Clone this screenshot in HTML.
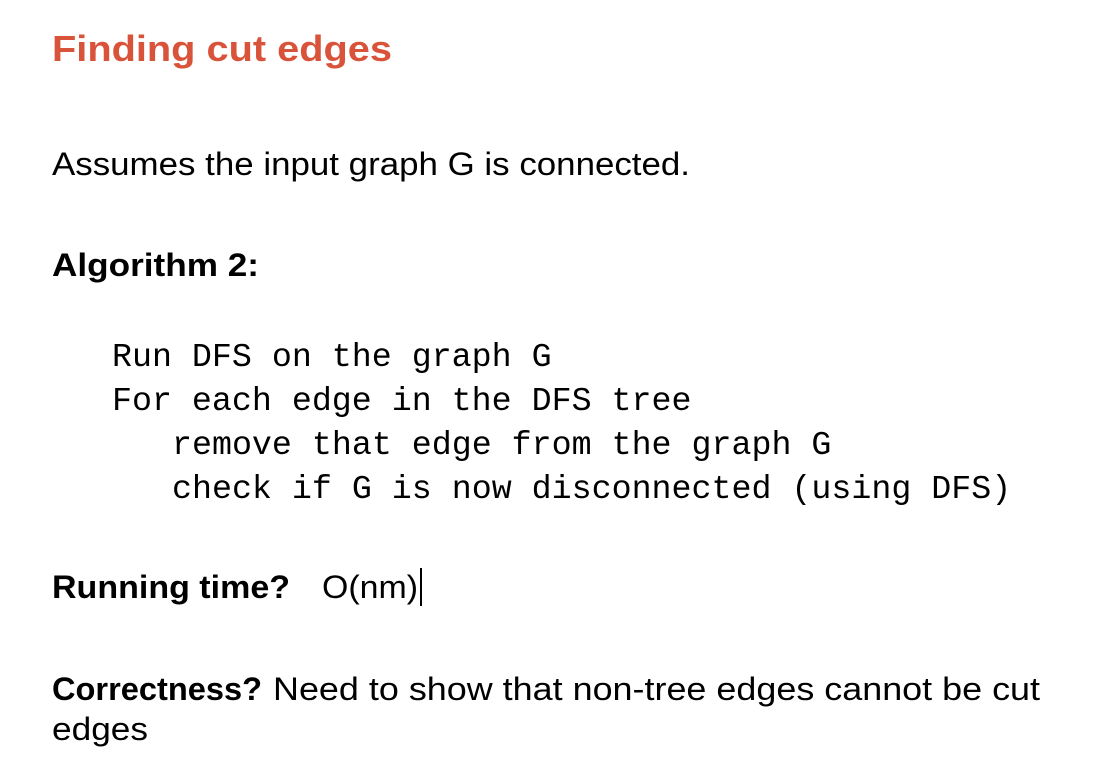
<!DOCTYPE html>
<html><head><style>html,body{margin:0;padding:0;background:#fff}svg{display:block}</style></head><body>
<svg width="1116" height="774" xmlns="http://www.w3.org/2000/svg">
<g font-family="Liberation Sans, sans-serif" fill="#000">
<text x="52" y="61" font-size="36" font-weight="bold" fill="#D9533A" textLength="340" lengthAdjust="spacingAndGlyphs">Finding cut edges</text>
<text x="52" y="175" font-size="32" textLength="638" lengthAdjust="spacingAndGlyphs">Assumes the input graph G is connected.</text>
<text x="52" y="276" font-size="32" font-weight="bold" textLength="207" lengthAdjust="spacingAndGlyphs">Algorithm 2:</text>
<text x="52" y="598" font-size="32" font-weight="bold" textLength="238" lengthAdjust="spacingAndGlyphs">Running time?</text>
<text x="322" y="598" font-size="32" textLength="96" lengthAdjust="spacingAndGlyphs">O(nm)</text>
<rect x="420" y="568" width="2" height="38" fill="#000"/>
<text x="52" y="700" font-size="32" font-weight="bold" textLength="210" lengthAdjust="spacingAndGlyphs">Correctness?</text>
<text x="273" y="700" font-size="32" textLength="767" lengthAdjust="spacingAndGlyphs">Need to show that non-tree edges cannot be cut</text>
<text x="52" y="740" font-size="32" textLength="96" lengthAdjust="spacingAndGlyphs">edges</text>
</g>
<g font-family="Liberation Mono, monospace" font-size="33.3" fill="#000">
<text x="112" y="366">Run DFS on the graph G</text>
<text x="112" y="410">For each edge in the DFS tree</text>
<text x="172" y="454">remove that edge from the graph G</text>
<text x="172" y="498">check if G is now disconnected (using DFS)</text>
</g>
</svg>
</body></html>
